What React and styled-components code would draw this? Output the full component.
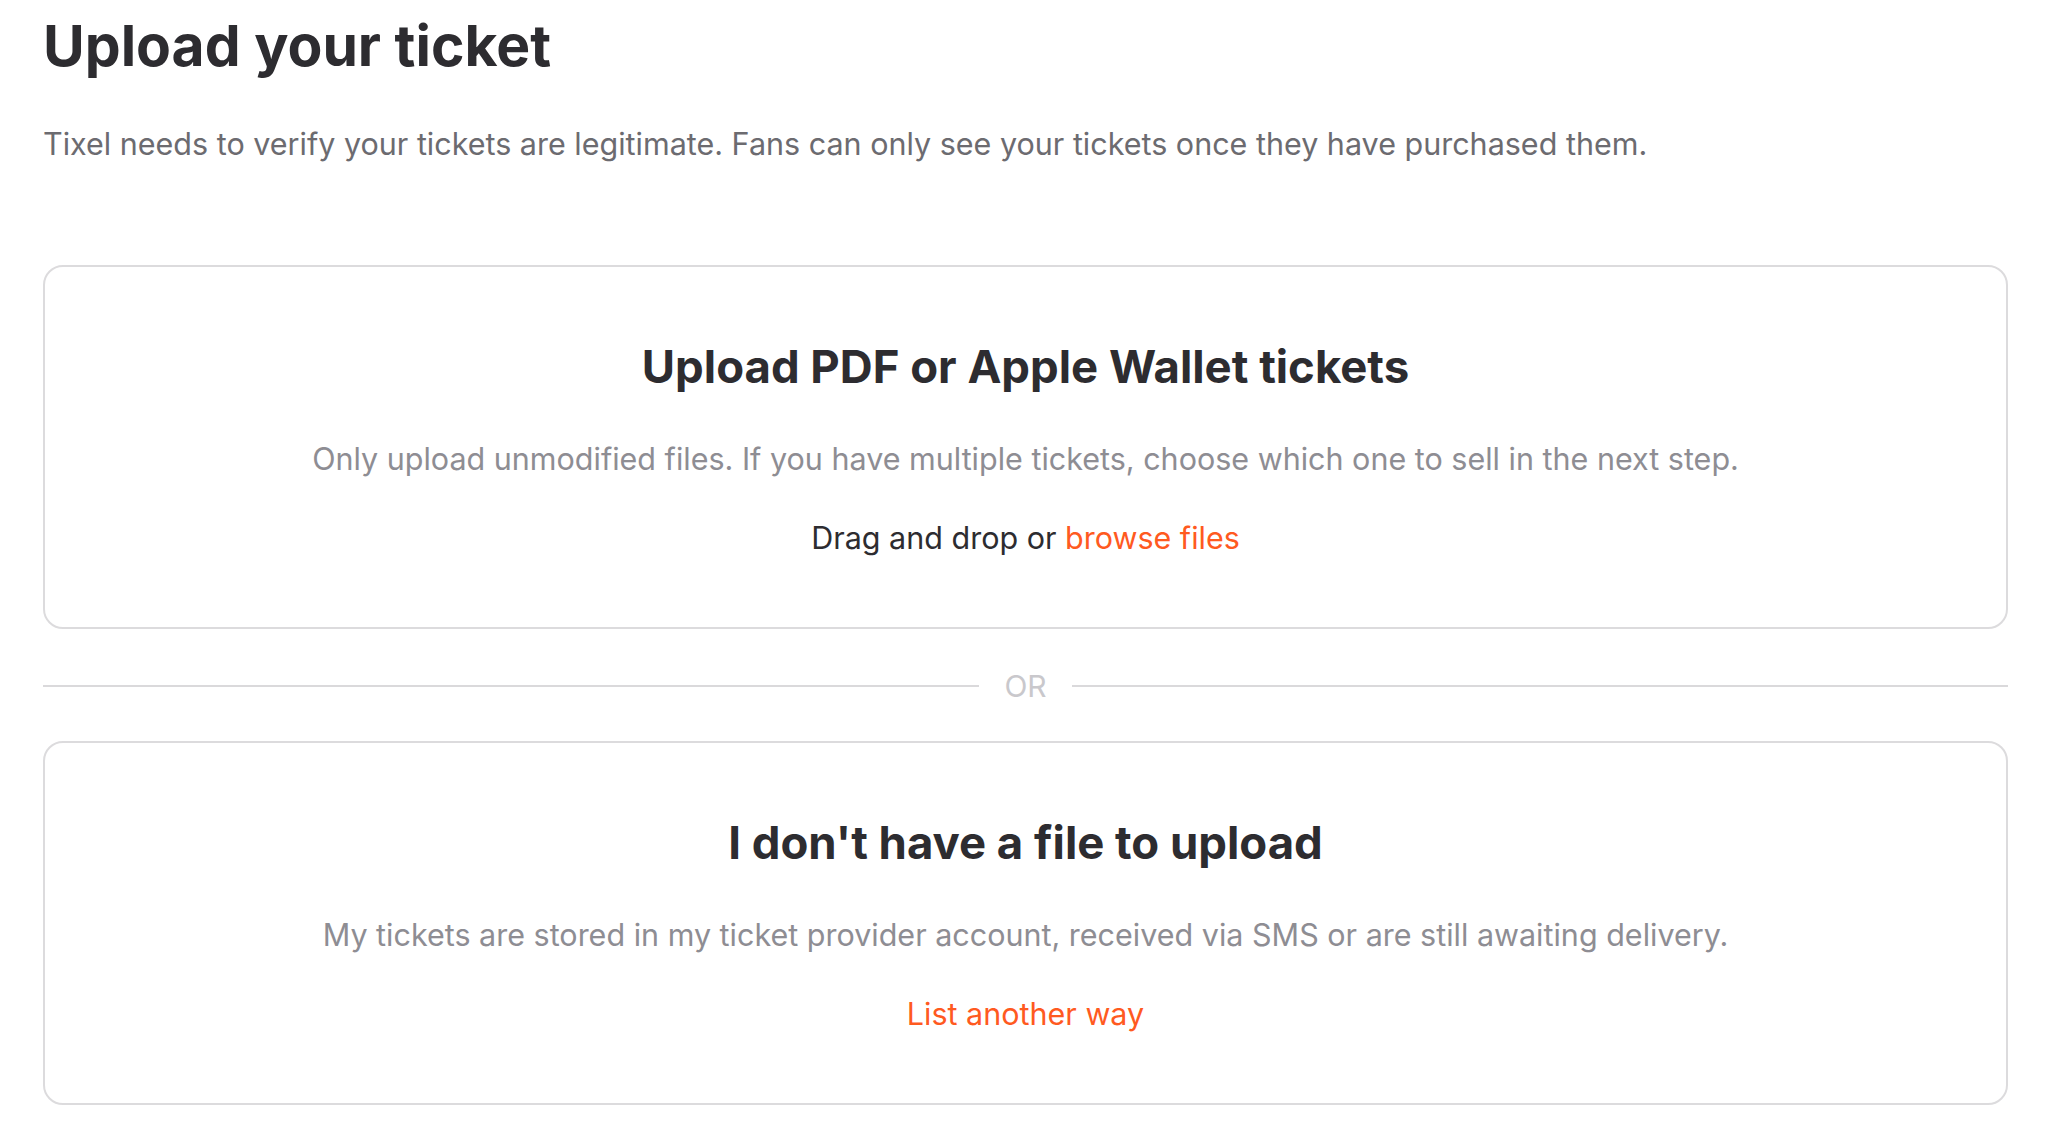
import React from "react";
import styled, { createGlobalStyle } from "styled-components";

const GlobalStyle = createGlobalStyle`
  html, body {
    margin: 0;
    padding: 0;
    background: #ffffff;
  }
  body {
    font-family: Inter, "Noto Sans", "Liberation Sans", sans-serif;
    -webkit-font-smoothing: antialiased;
  }
`;

const Page = styled.div`
  padding: 12px 42px 0 43px;
  display: flex;
  flex-direction: column;
`;

const Heading = styled.h1`
  margin: 0;
  font-size: 57px;
  line-height: 68px;
  font-weight: 700;
  color: #2d2c30;
`;

const Intro = styled.p`
  margin: 44px 0 101px;
  font-size: 30.5px;
  line-height: 40px;
  color: #6c6b70;
`;

const Card = styled.section`
  border: 2px solid #dcdbdd;
  border-radius: 20px;
  padding: 73px 40px 69px;
  display: flex;
  flex-direction: column;
  align-items: center;
  text-align: center;
`;

const CardTitle = styled.h2`
  margin: 0;
  font-size: 45.5px;
  line-height: 54px;
  font-weight: 700;
  color: #2d2c30;
`;

const CardText = styled.p`
  margin: 45px 0 0;
  font-size: 30.5px;
  line-height: 40px;
  color: #8e8d93;
`;

const Action = styled.div`
  margin-top: 39px;
  font-size: 30.5px;
  line-height: 40px;
  color: #2d2c30;
`;

const Link = styled.a`
  color: #ff5a1f;
  text-decoration: none;
  cursor: pointer;
`;

const Divider = styled.div`
  display: flex;
  align-items: center;
  gap: 25px;
  margin: 37px 0 35px;
  height: 40px;

  &::before,
  &::after {
    content: "";
    flex: 1;
    height: 2px;
    background: #dad9db;
  }
`;

const DividerLabel = styled.span`
  font-size: 30px;
  color: #c9c8cc;
`;

export default function App() {
  return (
    <>
      <GlobalStyle />
      <Page>
        <Heading>Upload your ticket</Heading>
        <Intro>
          Tixel needs to verify your tickets are legitimate. Fans can only see
          your tickets once they have purchased them.
        </Intro>

        <Card>
          <CardTitle>Upload PDF or Apple Wallet tickets</CardTitle>
          <CardText>
            Only upload unmodified files. If you have multiple tickets, choose
            which one to sell in the next step.
          </CardText>
          <Action>
            Drag and drop or <Link>browse files</Link>
          </Action>
        </Card>

        <Divider>
          <DividerLabel>OR</DividerLabel>
        </Divider>

        <Card>
          <CardTitle>I don't have a file to upload</CardTitle>
          <CardText>
            My tickets are stored in my ticket provider account, received via
            SMS or are still awaiting delivery.
          </CardText>
          <Action>
            <Link>List another way</Link>
          </Action>
        </Card>
      </Page>
    </>
  );
}
